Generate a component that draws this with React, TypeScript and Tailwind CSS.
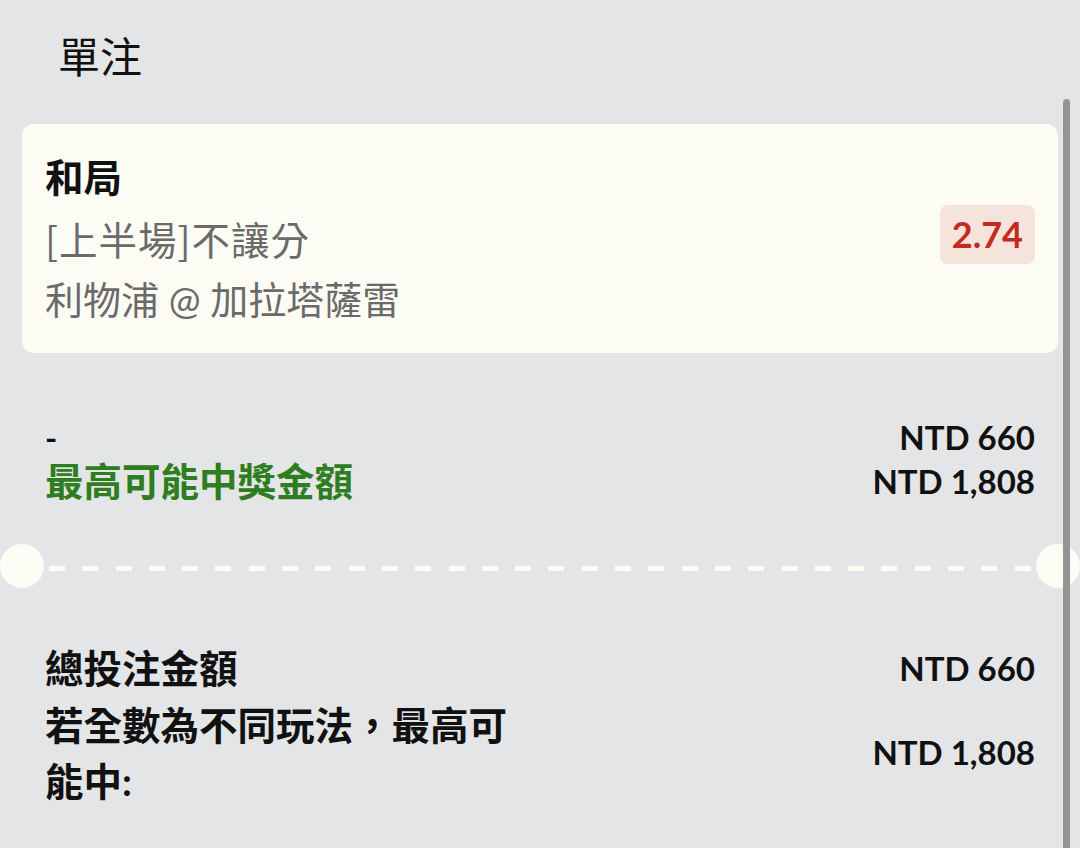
import React from "react";

const font = { fontFamily: "Lato, 'Noto Sans CJK TC', sans-serif" };
const cjk = { fontFamily: "'Noto Sans CJK TC', sans-serif" };

export default function App() {
  const dashes = Array.from({ length: 30 });
  return (
    <div
      className="relative w-[1080px] h-[848px] overflow-hidden bg-[#e4e5e7] text-[#111]"
      style={font}
    >
      {/* scrollbar */}
      <div className="absolute left-[1063px] top-[99px] w-[7px] h-[760px] rounded-t-full bg-[#949494]" />

      <div className="pt-[28px] pl-[58px] text-[42px] leading-[59px] font-normal">單注</div>

      <div className="px-[22px] mt-[37px]">
        <div className="rounded-[12px] bg-[#fdfcf4] px-[23px] py-[23px] flex items-center justify-between">
          <div className="text-[38.5px] leading-[61px]">
            <div className="font-bold text-[#111]">和局</div>
            <div className="text-[#6a6a6a] tracking-[1px]" style={cjk}>[上半場]不讓分</div>
            <div className="text-[#6a6a6a] text-[38px]">利物浦 @ 加拉塔薩雷</div>
          </div>
          <div className="h-[59px] px-[12px] mb-[9px] rounded-[8px] bg-[#f5e4dc] flex items-center text-[36px] font-bold text-[#c42a22]">
            2.74
          </div>
        </div>
      </div>

      <div className="px-[45px] mt-[63px]">
        <div className="flex justify-between items-center h-[44px]">
          <span className="text-[33px] font-bold">-</span>
          <span className="text-[33px] font-bold">NTD 660</span>
        </div>
        <div className="flex justify-between items-center h-[44px]">
          <span className="text-[38.5px] font-bold text-[#2f7d20]">最高可能中獎金額</span>
          <span className="text-[33px] font-bold">NTD 1,808</span>
        </div>
      </div>

      <div className="mt-[40px] flex items-center justify-between">
        <div className="w-[44px] h-[44px] rounded-full bg-[#fdfcf4] shrink-0" />
        <div className="flex-1 flex justify-between items-center px-[5px] pt-[5px]">
          {dashes.map((_, i) => (
            <div key={i} className="w-[16px] h-[5px] bg-[#fdfcf4]" />
          ))}
        </div>
        <div className="w-[44px] h-[44px] rounded-full bg-[#fdfcf4] shrink-0" />
      </div>

      <div className="px-[45px] mt-[52px] font-bold">
        <div className="flex justify-between items-center h-[57px]">
          <span className="text-[38.5px]">總投注金額</span>
          <span className="text-[33px]">NTD 660</span>
        </div>
        <div className="flex justify-between items-center">
          <span className="text-[38.5px] leading-[56px] max-w-[480px]">若全數為不同玩法，最高可能中:</span>
          <span className="text-[33px]">NTD 1,808</span>
        </div>
      </div>
    </div>
  );
}
